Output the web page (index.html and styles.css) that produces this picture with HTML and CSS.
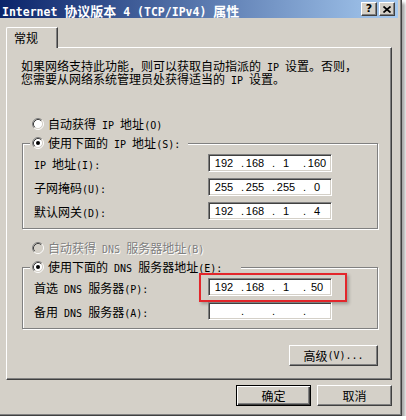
FILE: index.html
```html
<!DOCTYPE html>
<html lang="zh-CN">
<head>
<meta charset="utf-8">
<title>Internet 协议版本 4 (TCP/IPv4) 属性</title>
<link rel="stylesheet" href="styles.css">
</head>
<body>
<div class="window">
  <div class="titlebar">
    <div class="title"><span class="en">Internet </span>协议版本<span class="en"> 4 (TCP/IPv4) </span>属性</div>
    <div class="capbtns">
      <div class="capbtn">?</div>
      <div class="capbtn"><svg width="8" height="7" viewBox="0 0 8 7"><path d="M0.5 0.5L7.5 6.5M7.5 0.5L0.5 6.5" stroke="#000" stroke-width="1.7" fill="none"/></svg></div>
    </div>
  </div>
  <div class="client">
    <div class="tabs"><div class="tab">常规</div></div>
    <div class="panel">
      <p class="desc">如果网络支持此功能，则可以获取自动指派的<span class="en"> IP </span>设置。否则，<br>您需要从网络系统管理员处获得适当的<span class="en"> IP </span>设置。</p>

      <div class="radio-row first">
        <svg class="rb" width="12" height="12" viewBox="0 0 12 12"><circle cx="6" cy="6" r="4.5" fill="#fff"/><path d="M2.11 9.89A5.5 5.5 0 0 1 9.89 2.11" fill="none" stroke="#808080"/><path d="M9.89 2.11A5.5 5.5 0 0 1 2.11 9.89" fill="none" stroke="#fff"/><path d="M2.82 9.18A4.5 4.5 0 0 1 9.18 2.82" fill="none" stroke="#404040"/><path d="M9.18 2.82A4.5 4.5 0 0 1 2.82 9.18" fill="none" stroke="#d4d0c8"/></svg>
        <span>自动获得<span class="en"> IP </span>地址<span class="en">(O)</span></span>
      </div>

      <div class="group g1">
        <div class="legend l1">
          <svg class="rb" width="12" height="12" viewBox="0 0 12 12"><circle cx="6" cy="6" r="4.5" fill="#fff"/><path d="M2.11 9.89A5.5 5.5 0 0 1 9.89 2.11" fill="none" stroke="#808080"/><path d="M9.89 2.11A5.5 5.5 0 0 1 2.11 9.89" fill="none" stroke="#fff"/><path d="M2.82 9.18A4.5 4.5 0 0 1 9.18 2.82" fill="none" stroke="#404040"/><path d="M9.18 2.82A4.5 4.5 0 0 1 2.82 9.18" fill="none" stroke="#d4d0c8"/><circle cx="6" cy="6" r="2" fill="#000"/></svg>
          <span>使用下面的<span class="en"> IP </span>地址<span class="en">(S):</span></span>
        </div>
        <div class="field f-first">
          <span class="lbl"><span class="en">IP </span>地址<span class="en">(I):</span></span>
          <div class="ip"><span class="oct">192</span><span class="dot">.</span><span class="oct">168</span><span class="dot">.</span><span class="oct">1</span><span class="dot">.</span><span class="oct">160</span></div>
        </div>
        <div class="field">
          <span class="lbl">子网掩码<span class="en">(U):</span></span>
          <div class="ip"><span class="oct">255</span><span class="dot">.</span><span class="oct">255</span><span class="dot">.</span><span class="oct">255</span><span class="dot">.</span><span class="oct">0</span></div>
        </div>
        <div class="field">
          <span class="lbl">默认网关<span class="en">(D):</span></span>
          <div class="ip"><span class="oct">192</span><span class="dot">.</span><span class="oct">168</span><span class="dot">.</span><span class="oct">1</span><span class="dot">.</span><span class="oct">4</span></div>
        </div>
      </div>

      <div class="radio-row disabled">
        <svg class="rb" width="12" height="12" viewBox="0 0 12 12"><circle cx="6" cy="6" r="4.5" fill="#d4d0c8"/><path d="M2.11 9.89A5.5 5.5 0 0 1 9.89 2.11" fill="none" stroke="#808080"/><path d="M9.89 2.11A5.5 5.5 0 0 1 2.11 9.89" fill="none" stroke="#fff"/><path d="M2.82 9.18A4.5 4.5 0 0 1 9.18 2.82" fill="none" stroke="#404040"/><path d="M9.18 2.82A4.5 4.5 0 0 1 2.82 9.18" fill="none" stroke="#d4d0c8"/></svg>
        <span>自动获得<span class="en"> DNS </span>服务器地址<span class="en">(B)</span></span>
      </div>

      <div class="group g2">
        <div class="legend l2">
          <svg class="rb" width="12" height="12" viewBox="0 0 12 12"><circle cx="6" cy="6" r="4.5" fill="#fff"/><path d="M2.11 9.89A5.5 5.5 0 0 1 9.89 2.11" fill="none" stroke="#808080"/><path d="M9.89 2.11A5.5 5.5 0 0 1 2.11 9.89" fill="none" stroke="#fff"/><path d="M2.82 9.18A4.5 4.5 0 0 1 9.18 2.82" fill="none" stroke="#404040"/><path d="M9.18 2.82A4.5 4.5 0 0 1 2.82 9.18" fill="none" stroke="#d4d0c8"/><circle cx="6" cy="6" r="2" fill="#000"/></svg>
          <span>使用下面的<span class="en"> DNS </span>服务器地址<span class="en">(E):</span></span>
        </div>
        <div class="field f-first">
          <span class="lbl">首选<span class="en"> DNS </span>服务器<span class="en">(P):</span></span>
          <div class="ip"><span class="oct">192</span><span class="dot">.</span><span class="oct">168</span><span class="dot">.</span><span class="oct">1</span><span class="dot">.</span><span class="oct">50</span><div class="mark"></div></div>
        </div>
        <div class="field">
          <span class="lbl">备用<span class="en"> DNS </span>服务器<span class="en">(A):</span></span>
          <div class="ip"><span class="oct"></span><span class="dot">.</span><span class="oct"></span><span class="dot">.</span><span class="oct"></span><span class="dot">.</span><span class="oct"></span></div>
        </div>
      </div>

      <div class="adv-row"><div class="btn adv">高级<span class="en">(V)...</span></div></div>
    </div>
    <div class="footer">
      <div class="btn default">确定</div>
      <div class="btn">取消</div>
    </div>
  </div>
</div>
</body>
</html>
```

FILE: styles.css
```css
html, body {
  margin: 0;
  padding: 0;
}

body {
  background: #fff;
  font-family: "Noto Sans CJK SC", sans-serif;
  font-size: 12px;
  color: #000;
}

.en {
  font-family: "DejaVu Sans Mono", monospace;
  font-size: 10px;
  line-height: 0;
  white-space: pre;
}

.window {
  box-sizing: border-box;
  width: 402px;
  height: 416px;
  background: #d4d0c8;
  border-right: 1px solid #404040;
  border-bottom: 1px solid #404040;
  padding: 0 3px 3px 0;
  box-shadow: inset -1px -1px #808080, 3px 3px 3px rgba(0, 0, 0, 0.35);
}

/* title bar */
.titlebar {
  height: 18px;
  display: flex;
  align-items: center;
  justify-content: space-between;
  background: linear-gradient(to right, #0a246a, #a6caf0);
  padding-right: 3px;
}

.title {
  color: #fff;
  font-weight: bold;
  font-size: 13px;
  line-height: 15px;
  padding: 3px 0 0 2px;
  white-space: nowrap;
}

.title .en {
  font-size: 11.5px;
}

.capbtns {
  display: flex;
  gap: 2px;
}

.capbtn {
  box-sizing: border-box;
  width: 16px;
  height: 14px;
  background: #d4d0c8;
  border: 1px solid;
  border-color: #fff #404040 #404040 #fff;
  box-shadow: inset -1px -1px #808080;
  display: flex;
  align-items: center;
  justify-content: center;
  color: #000;
  font: bold 11px/12px "DejaVu Sans", sans-serif;
}

/* client */
.client {
  padding-top: 9px;
}

.tabs {
  display: flex;
  padding-left: 6px;
}

.tab {
  box-sizing: border-box;
  width: 52px;
  height: 21px;
  margin-bottom: -1px;
  position: relative;
  z-index: 1;
  background: #d4d0c8;
  border-left: 1px solid #fff;
  border-top: 1px solid #fff;
  border-right: 1px solid #404040;
  border-top-left-radius: 2px;
  box-shadow: inset -1px 0 #808080;
  padding: 3px 0 0 7px;
  line-height: 13px;
}

.panel {
  box-sizing: border-box;
  margin-left: 6px;
  width: 386px;
  height: 333px;
  border: 1px solid;
  border-color: #fff #404040 #404040 #fff;
  box-shadow: inset -1px -1px #808080;
}

.desc {
  margin: 11px 0 0 14px;
  line-height: 13px;
  white-space: nowrap;
}

.radio-row {
  display: flex;
  align-items: center;
  height: 13px;
  line-height: 13px;
  margin-left: 25px;
  white-space: nowrap;
}

.radio-row.first {
  margin-top: 32px;
}

.radio-row.disabled {
  margin-top: 12px;
  color: #808080;
  text-shadow: 1px 1px 0 #fff;
}

.rb {
  flex: none;
  margin-right: 4px;
}

.group {
  box-sizing: border-box;
  margin: 13px 0 0 15px;
  width: 356px;
  border: 1px solid #808080;
  box-shadow: inset 1px 1px #fff, 1px 1px #fff;
  padding: 0 0 8px 11px;
}

.legend {
  box-sizing: border-box;
  display: flex;
  align-items: center;
  height: 13px;
  line-height: 13px;
  margin: -8px 0 0 -4px;
  padding: 0 0 0 2px;
  background: #d4d0c8;
  white-space: nowrap;
}

.l1 {
  width: 158px;
}

.l2 {
  width: 211px;
}

.field {
  display: flex;
  align-items: center;
  margin-top: 6px;
}

.field.f-first {
  margin-top: 5px;
}

.lbl {
  width: 174px;
  line-height: 13px;
  white-space: nowrap;
}

.ip {
  box-sizing: border-box;
  position: relative;
  width: 124px;
  height: 18px;
  background: #fff;
  border: 1px solid;
  border-color: #808080 #fff #fff #808080;
  box-shadow: inset 1px 1px #404040, inset -1px -1px #d4d0c8;
  display: flex;
  align-items: center;
  padding-left: 5px;
  font: 11px/12px "Liberation Sans", sans-serif;
}

.oct {
  width: 20px;
  text-align: center;
}

.dot {
  box-sizing: border-box;
  width: 11px;
  padding-left: 7px;
}

.mark {
  position: absolute;
  left: -10px;
  top: -6px;
  width: 148px;
  height: 29px;
  box-sizing: border-box;
  border: 2px solid #e3262b;
  box-shadow: 2px 2px 3px rgba(0, 0, 0, 0.25);
}

.adv-row {
  display: flex;
  justify-content: flex-end;
  margin: 16px 13px 0 0;
}

.btn {
  box-sizing: border-box;
  height: 21px;
  width: 75px;
  display: flex;
  align-items: center;
  justify-content: center;
  border: 1px solid;
  border-color: #fff #404040 #404040 #fff;
  box-shadow: inset -1px -1px #808080;
  line-height: 13px;
  white-space: nowrap;
}

.btn.adv {
  width: 89px;
}

.btn.default {
  border-color: #000;
  box-shadow: inset 1px 1px #fff, inset -1px -1px #404040, inset -2px -2px #808080;
}

.footer {
  display: flex;
  justify-content: flex-end;
  gap: 6px;
  margin-top: 5px;
  padding-right: 6px;
}
```
